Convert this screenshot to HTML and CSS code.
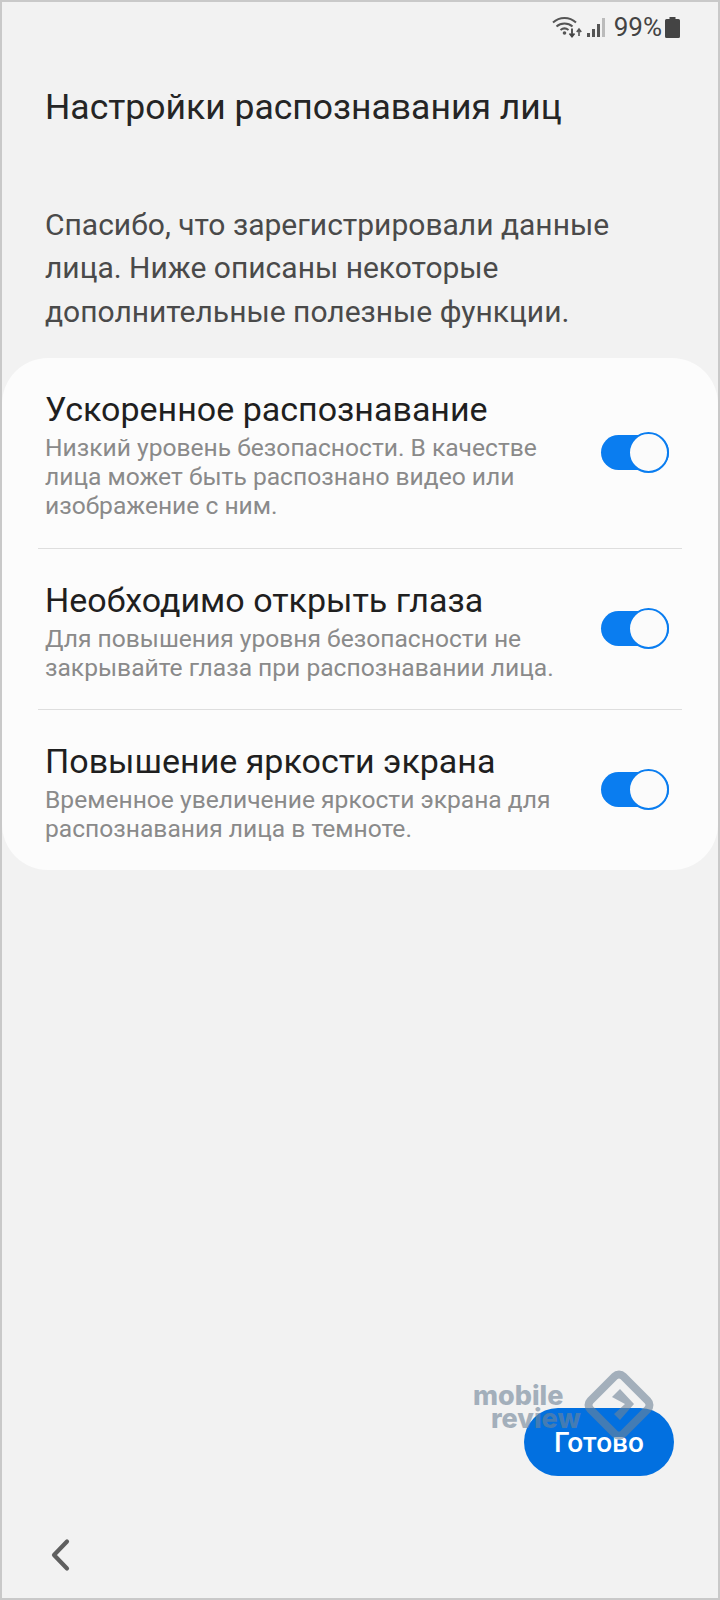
FILE: index.html
```html
<!DOCTYPE html>
<html lang="en">
<head>
    <meta charset="UTF-8">
    <meta name="viewport" content="width=device-width, initial-scale=1.0">
    <title>Настройки распознавания лиц</title>
    <link rel="stylesheet" href="styles.css">
</head>
<body>
    <div class="screen">
        <div class="status-bar">
            <svg class="wifi" width="30" height="22" viewBox="0 0 30 22">
                <path d="M1 6.5C7.5 0.5 17.5 0.5 24 6.5M4.5 10.5C9 6.5 16 6.5 20.5 10.5M8.5 14C11 12 14 12 16.5 14" fill="none" stroke="#555" stroke-width="2"/>
                <circle cx="12.5" cy="17" r="1.8" fill="#555"/>
                <path d="M20 12.5V20M17.5 17.5L20 20.5L22.5 17.5" fill="none" stroke="#444" stroke-width="1.8"/>
                <path d="M27 20V13.5M24.8 16L27 13L29.2 16" fill="none" stroke="#555" stroke-width="1.6"/>
            </svg>
            <div class="signal">
                <span class="bar bar-1"></span>
                <span class="bar bar-2"></span>
                <span class="bar bar-3"></span>
                <span class="bar bar-4"></span>
            </div>
            <span class="battery-text">99%</span>
            <svg class="battery" width="15" height="21" viewBox="0 0 15 21">
                <path d="M4.5 0H10.5V2H13.5A1.5 1.5 0 0 1 15 3.5V19.5A1.5 1.5 0 0 1 13.5 21H1.5A1.5 1.5 0 0 1 0 19.5V3.5A1.5 1.5 0 0 1 1.5 2H4.5Z" fill="#444"/>
            </svg>
        </div>

        <h1>Настройки распознавания лиц</h1>

        <p class="intro">Спасибо, что зарегистрировали данные лица. Ниже описаны некоторые дополнительные полезные функции.</p>

        <div class="card">
            <div class="row row-first">
                <div class="row-text">
                    <div class="row-title">Ускоренное распознавание</div>
                    <div class="row-desc">Низкий уровень безопасности. В качестве лица может быть распознано видео или изображение с ним.</div>
                </div>
                <div class="toggle"><div class="knob"></div></div>
            </div>
            <div class="row">
                <div class="row-text">
                    <div class="row-title">Необходимо открыть глаза</div>
                    <div class="row-desc">Для повышения уровня безопасности не закрывайте глаза при распознавании лица.</div>
                </div>
                <div class="toggle"><div class="knob"></div></div>
            </div>
            <div class="row row-last">
                <div class="row-text">
                    <div class="row-title">Повышение яркости экрана</div>
                    <div class="row-desc">Временное увеличение яркости экрана для распознавания лица в темноте.</div>
                </div>
                <div class="toggle"><div class="knob"></div></div>
            </div>
        </div>

        <div class="spacer"></div>

        <div class="action-bar">
            <button class="done">Готово</button>
            <div class="watermark">
                <div class="wm-text">mobile<br><span class="wm-review">review</span></div>
                <svg class="wm-logo" width="70" height="70" viewBox="0 0 70 70">
                    <rect x="11.7" y="11.7" width="46.6" height="46.6" rx="6" fill="none" stroke="#6f8498" stroke-width="8" transform="rotate(45 35 35)"/>
                    <path d="M36 19L50 34L36 50L30 44L41 34L28 27Z" fill="#6f8498"/>
                </svg>
            </div>
        </div>

        <div class="nav-bar">
            <svg width="24" height="36" viewBox="0 0 24 36">
                <path d="M19 4.5L6 18L19 31.5" fill="none" stroke="#5f5f5f" stroke-width="4.2" stroke-linecap="round" stroke-linejoin="round"/>
            </svg>
        </div>
    </div>
</body>
</html>
```

FILE: styles.css
```css
* {
    box-sizing: border-box;
}

body {
    margin: 0;
    font-family: Roboto, "Noto Sans", sans-serif;
    background-color: #f2f2f2;
}

.screen {
    width: 720px;
    height: 1600px;
    border: 2px solid #c9c9c9;
    background-color: #f2f2f2;
    display: flex;
    flex-direction: column;
}

.status-bar {
    height: 50px;
    padding: 0 38px 0 0;
    display: flex;
    justify-content: flex-end;
    align-items: center;
    color: #444;
}

.wifi {
    margin-right: 5px;
}

.signal {
    display: flex;
    align-items: flex-end;
    gap: 2px;
    height: 20px;
    margin-right: 9px;
}

.bar {
    width: 3px;
    background-color: #555;
}

.bar-1 {
    height: 4px;
}

.bar-2 {
    height: 8px;
}

.bar-3 {
    height: 13px;
}

.bar-4 {
    height: 19px;
    background-color: #bbb;
}

.battery-text {
    font-size: 26px;
    margin-right: 3px;
}

h1 {
    margin: 32px 0 0 43px;
    font-size: 35.5px;
    line-height: 46px;
    font-weight: 400;
    color: #252525;
}

.intro {
    margin: 73px 70px 0 43px;
    font-size: 30px;
    line-height: 43.3px;
    color: #4a4a4a;
}

.card {
    margin-top: 25px;
    background-color: #fcfcfc;
    border-radius: 46px;
    padding: 0 36px;
}

.row {
    display: flex;
    align-items: center;
    justify-content: space-between;
    padding: 27px 0 27px 7px;
    border-bottom: 1px solid #dedede;
}

.row-first {
    padding-top: 27px;
    padding-bottom: 28px;
}

.row-last {
    border-bottom: none;
    padding-bottom: 27px;
}

.row-text {
    width: 520px;
}

.row-title {
    font-size: 34px;
    line-height: 48px;
    color: #1f1f1f;
}

.row-desc {
    font-size: 24.6px;
    line-height: 29px;
    color: #8a8a8a;
}

.toggle {
    width: 68px;
    height: 35px;
    margin-right: 13px;
    border-radius: 18px;
    background-color: #0a7df0;
    position: relative;
}

.knob {
    position: absolute;
    right: 0;
    top: -3px;
    width: 41px;
    height: 41px;
    border-radius: 50%;
    background-color: #fbfbfb;
    border: 2px solid #0a7df0;
}

.spacer {
    flex: 1;
}

.action-bar {
    position: relative;
    display: flex;
    justify-content: flex-end;
    padding-right: 44px;
}

.done {
    width: 150px;
    height: 68px;
    border: none;
    border-radius: 34px;
    background-color: #0270e0;
    color: #fff;
    font-family: Roboto, "Noto Sans", sans-serif;
    font-size: 28px;
    font-weight: 500;
}

.watermark {
    position: absolute;
    right: 64px;
    top: -38px;
    display: flex;
    align-items: flex-start;
    opacity: 0.6;
}

.wm-text {
    width: 111px;
    font-family: Inter, Roboto, sans-serif;
    font-size: 27px;
    line-height: 23px;
    font-weight: 800;
    color: #6f8498;
    margin-top: 14px;
    white-space: nowrap;
}

.wm-review {
    margin-left: 18px;
}

.nav-bar {
    height: 122px;
    padding: 61px 0 0 46px;
}
```
